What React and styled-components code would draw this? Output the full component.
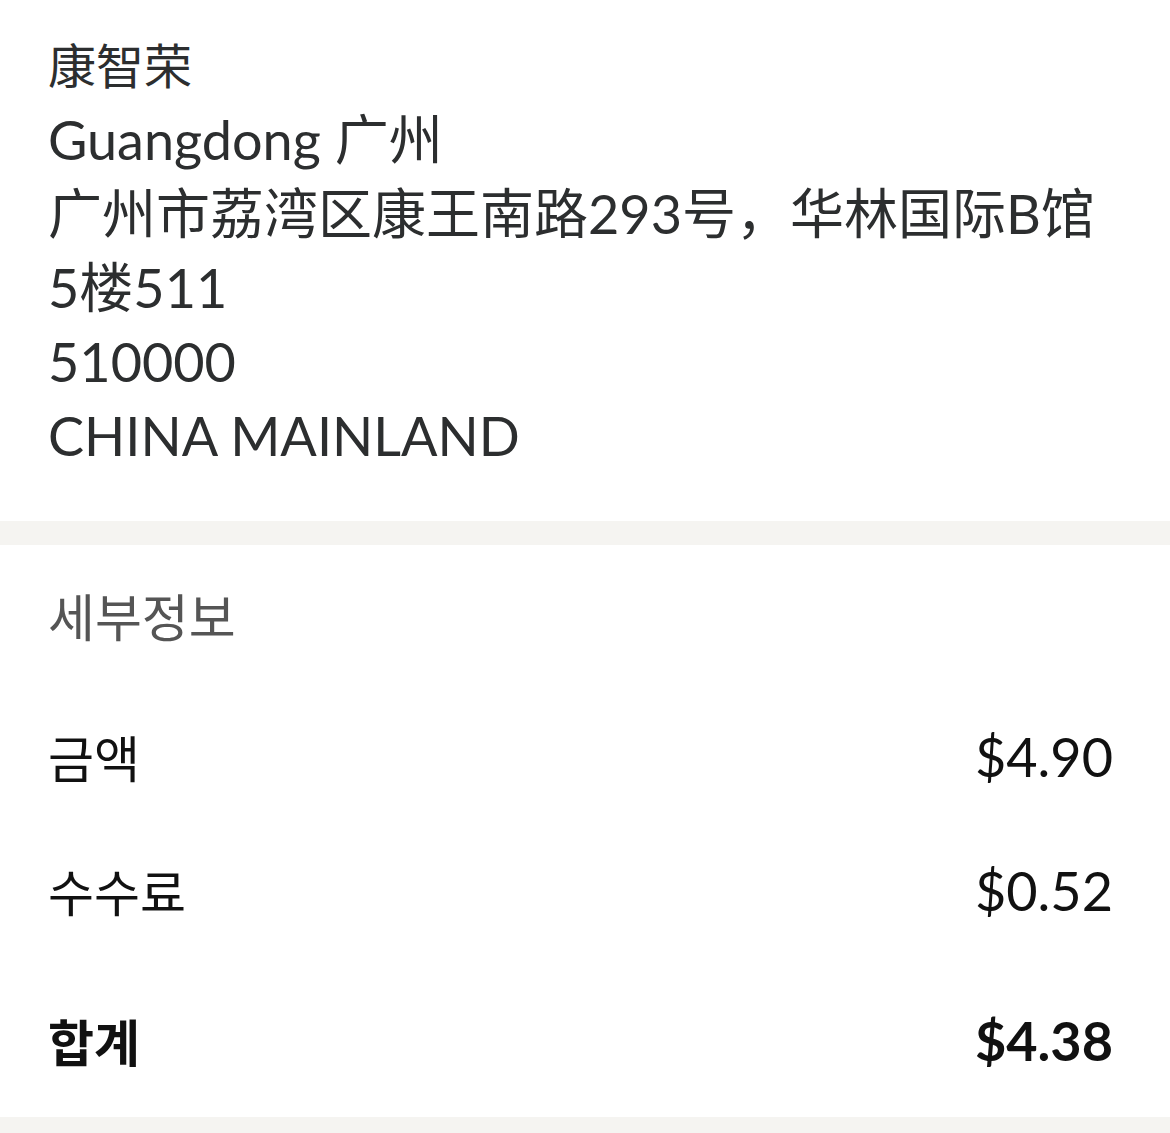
import styled, { createGlobalStyle } from "styled-components";

const GlobalStyle = createGlobalStyle`
  body {
    margin: 0;
    background: #ffffff;
    font-family: Lato, "Noto Sans CJK SC", sans-serif;
  }
`;

const address = [
  { text: "康智荣", name: true },
  { text: "Guangdong 广州" },
  { text: "广州市荔湾区康王南路293号，华林国际B馆" },
  { text: "5楼511" },
  { text: "510000" },
  { text: "CHINA MAINLAND" },
];

const rows = [
  { label: "금액", amount: "$4.90" },
  { label: "수수료", amount: "$0.52" },
  { label: "합계", amount: "$4.38", total: true },
];

export default function App() {
  return (
    <>
      <GlobalStyle />
      <Page>
        <AddressCard>
          {address.map((line) => (
            <AddressLine key={line.text} $name={line.name}>
              {line.text}
            </AddressLine>
          ))}
        </AddressCard>
        <Divider />
        <DetailsCard>
          <SectionTitle>세부정보</SectionTitle>
          {rows.map((row) => (
            <Row key={row.label} $total={row.total}>
              <Label>{row.label}</Label>
              <Amount>{row.amount}</Amount>
            </Row>
          ))}
        </DetailsCard>
        <Divider $fill />
      </Page>
    </>
  );
}

const Page = styled.div`
  display: flex;
  flex-direction: column;
  min-height: 100vh;
`;

const AddressCard = styled.div`
  padding: 29px 48px 48px;
  display: flex;
  flex-direction: column;
`;

const AddressLine = styled.span`
  font-family: Lato, "Noto Sans CJK SC", sans-serif;
  font-size: ${({ $name }) => ($name ? "48px" : "54px")};
  line-height: 74px;
  color: #2c2e2f;
  white-space: nowrap;
`;

const Divider = styled.div`
  height: 24px;
  background: #f5f4f1;
  flex: ${({ $fill }) => ($fill ? 1 : "none")};
`;

const DetailsCard = styled.div`
  padding: 36px 57px 10px 48px;
  display: flex;
  flex-direction: column;
`;

const SectionTitle = styled.h2`
  margin: 0 0 34px;
  font-family: Lato, "Noto Sans CJK KR", sans-serif;
  font-size: 51px;
  font-weight: 400;
  line-height: 74px;
  color: #555555;
`;

const Row = styled.div`
  display: flex;
  justify-content: space-between;
  align-items: center;
  height: 134px;
  margin-top: ${({ $total }) => ($total ? "16px" : "0")};
  color: #111111;
  font-weight: ${({ $total }) => ($total ? 700 : 400)};
`;

const Label = styled.span`
  font-family: Lato, "Noto Sans CJK KR", sans-serif;
  font-size: 50px;
`;

const Amount = styled.span`
  font-family: Lato, sans-serif;
  font-size: 54px;
`;
